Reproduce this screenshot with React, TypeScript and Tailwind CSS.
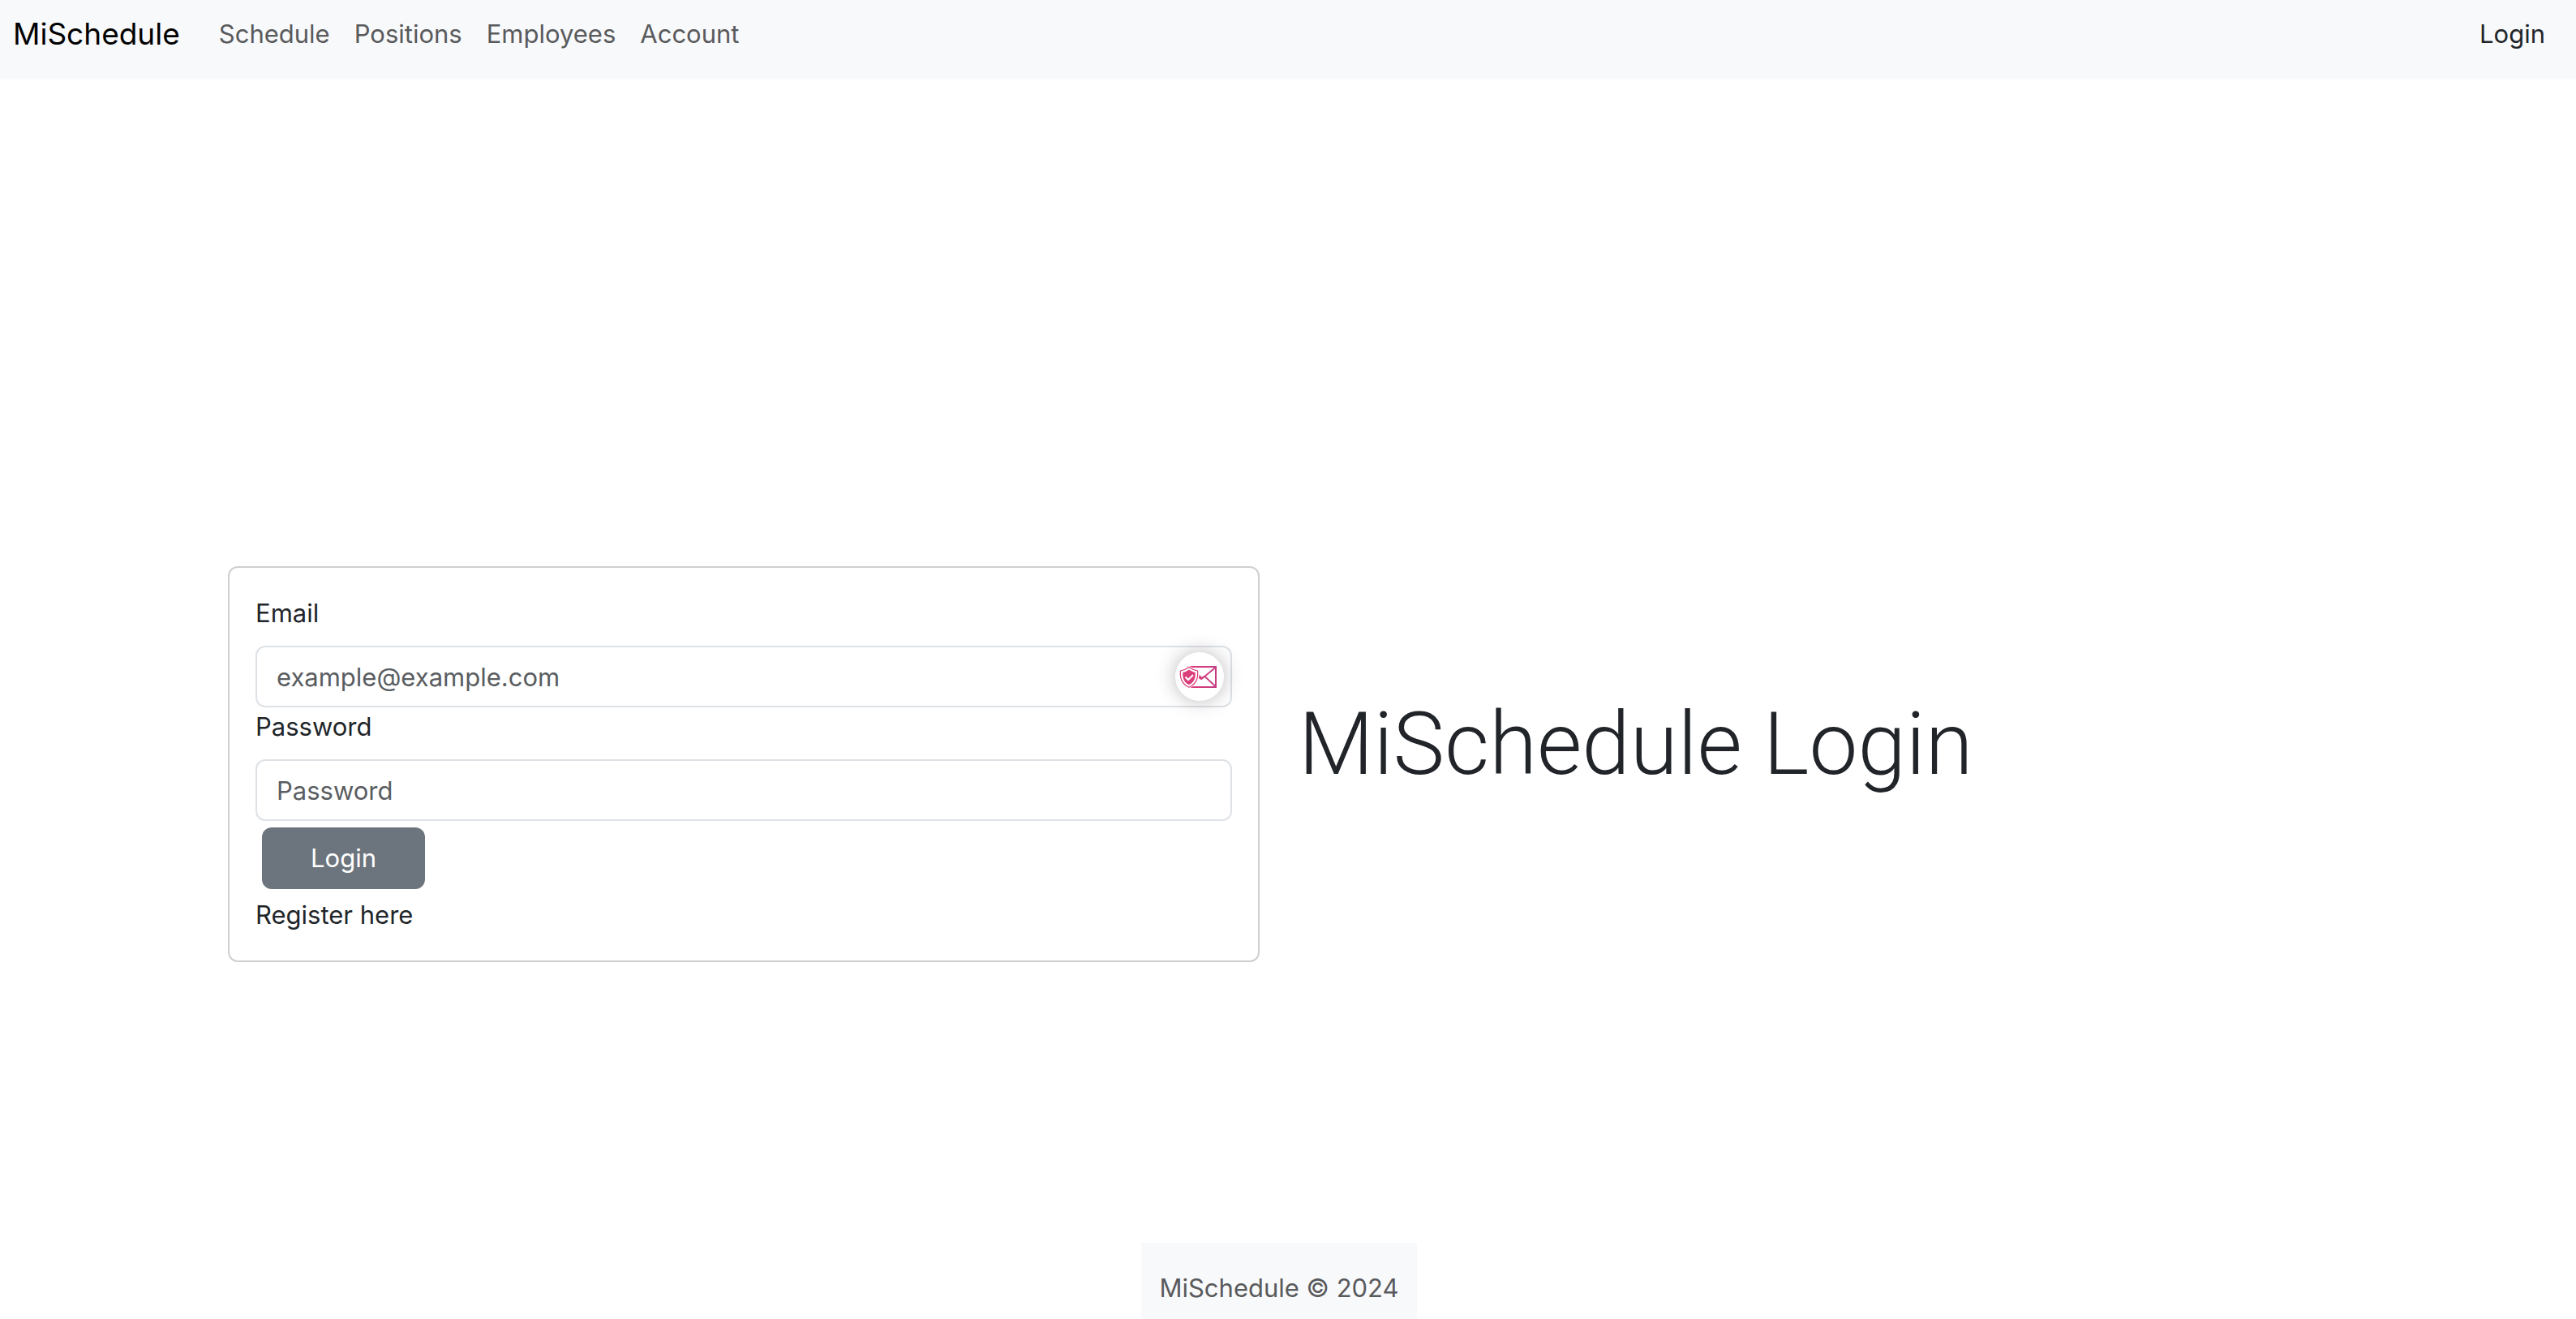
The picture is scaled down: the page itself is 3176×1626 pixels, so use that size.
const navItems = ["Schedule", "Positions", "Employees", "Account"];

const inputClass =
  "block h-[76px] w-full rounded-xl border-2 border-[#dee2e6] bg-white px-6 text-[31px] text-[#212529] placeholder:text-[#5a5d61] placeholder:opacity-100 outline-none focus:border-[#86b7fe]";

function SecureMailIcon() {
  return (
    <svg viewBox="-1 -1 90 90" className="size-[90px]" fill="none" aria-hidden="true">
      <defs>
        <linearGradient id="mail" x1="0" y1="0" x2="1" y2="0">
          <stop offset="0" stopColor="#df3b78" />
          <stop offset="1" stopColor="#c43d83" />
        </linearGradient>
      </defs>
      <g stroke="url(#mail)" strokeWidth="2">
        <path d="M30 32H64V57H30Z" />
        <path d="M31 32.5L43 42.5L47 46.5L64 32.5M41 43.5L46 47L49 44M50 43.5L64 56.5" strokeWidth="1.8" />
      </g>
      <path d="M31 32.500Q36 36 42 37C43 46 39.500 53.500 31 57.200C22.500 53.500 19 46 20 37Q26 36 31 32.500Z" fill="#fff" stroke="#fff" strokeWidth="3" />
      <path d="M31 32.500Q36 36 41.500 37C42.500 46 39.500 53.500 31 57.200C22.500 53.500 19.500 46 20.500 37Q26 36 31 32.500Z" fill="#fff" stroke="#d93c79" strokeWidth="1.200" />
      <path d="M31 35.500Q35 38.300 38.700 39C39.300 46 37 51.500 31 54.300C25 51.500 22.700 46 23.300 39Q27 38.300 31 35.500Z" fill="#da3e7b" />
      <path d="M26.500 44.500L30 48L36 42" stroke="#fff" strokeWidth="2" />
    </svg>
  );
}

export default function App() {
  return (
    <div className="flex min-h-screen flex-col bg-white font-['Inter',sans-serif] text-[31px] leading-[48px] text-[#212529]">
      <nav className="flex h-[98px] items-start bg-[#f8f9fb] pt-[18px] pr-[38px] pl-4">
        <a href="#" className="mr-12 text-[37px] text-black">
          MiSchedule
        </a>
        <ul className="flex flex-1 gap-[30px]">
          {navItems.map((item) => (
            <li key={item}>
              <a href="#" className="text-[#595a5c]">
                {item}
              </a>
            </li>
          ))}
        </ul>
        <a href="#">Login</a>
      </nav>

      <main className="flex flex-1 flex-col justify-center pt-[254px] pr-[22px]">
        <div className="mx-auto grid w-full max-w-[2640px] grid-cols-2 items-center">
          <div className="px-6">
            <form
              className="rounded-xl border-2 border-[#cfcfcf] p-8"
              onSubmit={(e) => e.preventDefault()}
            >
              <label htmlFor="email" className="mb-4 block">
                Email
              </label>
              <div className="relative">
                <input id="email" type="email" placeholder="example@example.com" className={inputClass} />
                <button
                  type="button"
                  aria-label="Generate secure email"
                  className="absolute top-2 right-[10px] flex size-[60px] items-center justify-center rounded-full bg-white shadow-[0_0_24px_rgba(0,0,0,0.28)]"
                >
                  <span className="-m-4 block shrink-0">
                    <SecureMailIcon />
                  </span>
                </button>
              </div>
              <label htmlFor="password" className="mb-4 block">
                Password
              </label>
              <input id="password" type="password" placeholder="Password" className={inputClass} />
              <button type="submit" className="m-2 block h-[76px] w-[201px] rounded-xl bg-[#6c757d] text-white">
                Login
              </button>
              <a href="#" className="block w-fit">
                Register here
              </a>
            </form>
          </div>
          <div className="px-6">
            <h1 className="mb-12 font-['Roboto',sans-serif] text-[107px] leading-[134px] font-[350]">MiSchedule Login</h1>
          </div>
        </div>
      </main>

      <div className="flex justify-center pr-[22px]">
        <footer className="h-[94px] bg-[#f8f9fb] px-[22px] pt-8 text-[#595a5c]">MiSchedule © 2024</footer>
      </div>
    </div>
  );
}
